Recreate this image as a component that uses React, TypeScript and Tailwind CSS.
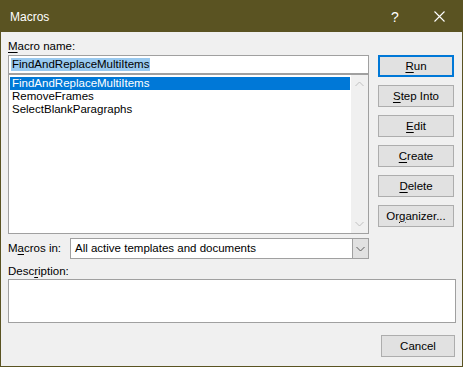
import React from "react";

const U = ({ children }: { children: React.ReactNode }) => (
  <span className="underline decoration-1 underline-offset-[2px]">{children}</span>
);

const Btn = ({ children, primary }: { children: React.ReactNode; primary?: boolean }) => (
  <div
    className={
      "h-[22px] w-[76px] flex items-center justify-center bg-[#e1e1e1] leading-[15px] " +
      (primary ? "border-2 border-[#0078d7]" : "border border-[#adadad]")
    }
  >
    {children}
  </div>
);

const Chevron = ({ up, color }: { up?: boolean; color: string }) => (
  <svg width="9" height="6" viewBox="0 0 9 6">
    <path
      d={up ? "M0.5 5 L4.5 1 L8.5 5" : "M0.5 1 L4.5 5 L8.5 1"}
      fill="none"
      stroke={color}
      strokeWidth="1"
    />
  </svg>
);

export default function App() {
  return (
    <div
      className="w-[463px] h-[367px] border border-[#5a5322] bg-[#f0f0f0] flex flex-col text-black text-[11.5px]"
      style={{ fontFamily: '"Liberation Sans", Arial, sans-serif' }}
    >
      {/* Title bar */}
      <div className="h-[31px] bg-[#5a5322] flex items-center text-white shrink-0">
        <div className="pl-[9px] text-[12px] flex-1">Macros</div>
        <div className="w-[46px] flex justify-center text-[14px] leading-[14px] mr-[-2px]">?</div>
        <div className="w-[46px] flex justify-center">
          <svg width="11" height="11" viewBox="0 0 11 11">
            <path d="M0.5 0.5 L10.5 10.5 M10.5 0.5 L0.5 10.5" stroke="white" strokeWidth="1.1" />
          </svg>
        </div>
      </div>

      {/* Client */}
      <div className="flex-1 flex flex-col pl-[7px] pr-[6px]">
        <div className="flex">
          {/* left column */}
          <div className="w-[361px] flex flex-col">
            <div className="mt-[7px] h-[15px] leading-[15px]">
              <U>M</U>acro name:
            </div>
            <div className="mt-[1px] h-[19px] bg-white border border-[#a0a0a0] flex items-center pl-[2px]">
              <span className="bg-[#99c9ef] leading-[13px] h-[13px] px-[1px]">FindAndReplaceMultiItems</span>
            </div>
            <div className="h-[160px] bg-white border border-[#a0a0a0] flex">
              <div className="flex-1 pl-[1px] pr-[1px] pt-[2px] flex flex-col">
                <div className="h-[13px] leading-[13px] bg-[#0078d7] text-white pl-[2px]">
                  FindAndReplaceMultiItems
                </div>
                <div className="h-[13px] leading-[13px] pl-[2px]">RemoveFrames</div>
                <div className="h-[13px] leading-[13px] pl-[2px]">SelectBlankParagraphs</div>
              </div>
              <div className="w-[17px] bg-[#f0f0f0] flex flex-col items-center justify-between py-[6px]">
                <Chevron up color="#c0c0c0" />
                <Chevron color="#c0c0c0" />
              </div>
            </div>
            <div className="mt-[4px] flex items-center h-[21px]">
              <div className="w-[62px] leading-[15px]">
                M<U>a</U>cros in:
              </div>
              <div className="flex-1 h-[21px] bg-white border border-[#a0a0a0] flex items-center">
                <div className="flex-1 pl-[4px] leading-[15px]">All active templates and documents</div>
                <div className="w-[17px] h-[21px] -my-[1px] -mr-[1px] bg-[#e1e1e1] border border-[#a0a0a0] flex items-center justify-center">
                  <Chevron color="#5a5a5a" />
                </div>
              </div>
            </div>
          </div>

          {/* right column buttons */}
          <div className="ml-[9px] flex flex-col gap-[8px] pt-[23px]">
            <Btn primary>
              <U>R</U>un
            </Btn>
            <Btn>
              <U>S</U>tep Into
            </Btn>
            <Btn>
              <U>E</U>dit
            </Btn>
            <Btn>
              <U>C</U>reate
            </Btn>
            <Btn>
              <U>D</U>elete
            </Btn>
            <Btn>
              Or<U>g</U>anizer...
            </Btn>
          </div>
        </div>

        <div className="mt-[5px] h-[15px] leading-[15px]">
          Desc<U>r</U>iption:
        </div>
        <div className="h-[44px] bg-white border border-[#a0a0a0]" />
        <div className="mt-[12px] flex justify-end pr-[1px]">
          <div className="h-[22px] w-[74px] flex items-center justify-center bg-[#e1e1e1] border border-[#adadad] leading-[15px]">
            Cancel
          </div>
        </div>
      </div>
    </div>
  );
}
